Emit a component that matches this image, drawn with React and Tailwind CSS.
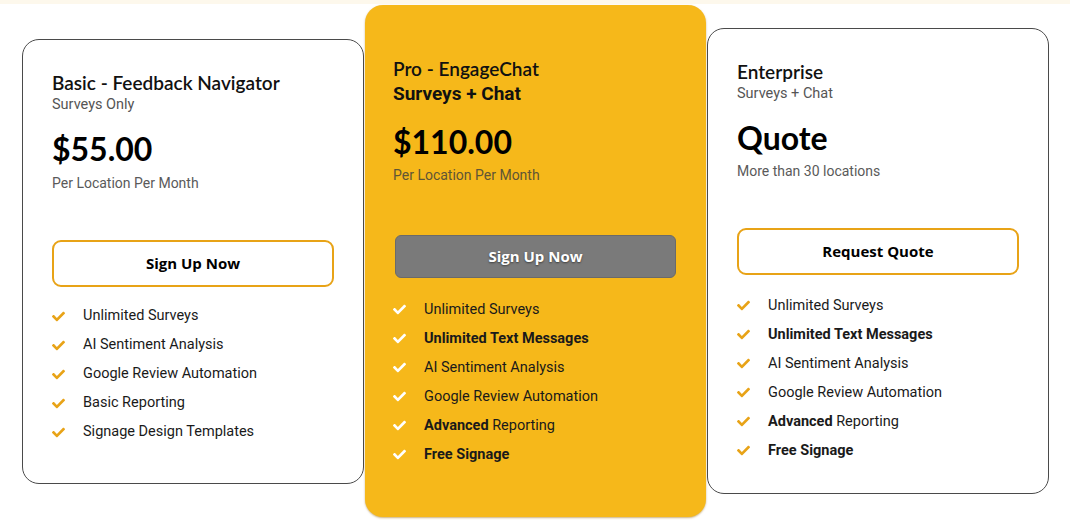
import React from 'react';
import { FaCheck } from 'react-icons/fa';

const lato = { fontFamily: 'Lato, "Open Sans", sans-serif' };
const roboto = { fontFamily: 'Roboto, "Liberation Sans", sans-serif' };
const openSans = { fontFamily: '"Open Sans", "Liberation Sans", sans-serif' };

const Feature = ({ children, light }) => (
    <li className="flex items-center h-[29px]">
        <FaCheck className={`w-[13px] h-[13px] shrink-0 ${light ? 'text-white' : 'text-[#e8a317]'}`} />
        <span className="ml-[18px] text-[14.5px] text-[#1a1a1a]" style={roboto}>{children}</span>
    </li>
);

const App = () => {
    return (
        <div className="w-[1070px] h-[528px] bg-white overflow-hidden">
            <div className="h-[4px] bg-[#fdf8ec]"></div>
            <div className="flex items-center gap-[1px] px-[22px] h-[514px]">
                {/* Basic */}
                <div className="w-[342px] h-[445px] border border-[#4a4a4a] rounded-[17px] bg-white pl-[29px] pr-[29px] pt-[30px]">
                    <h2 className="text-[19px] font-semibold text-[#111] leading-[26px]" style={lato}>Basic - Feedback Navigator</h2>
                    <p className="text-[14.5px] text-[#555] leading-[18px]" style={roboto}>Surveys Only</p>
                    <p className="mt-[15px] text-[32px] font-bold text-black leading-[40px]" style={lato}>$55.00</p>
                    <p className="mt-[5px] text-[14px] text-[#5a5a5a] leading-[18px]" style={roboto}>Per Location Per Month</p>
                    <button className="mt-[48px] w-[282px] h-[47px] border-2 border-[#e8a317] rounded-[9px] bg-white text-[15px] font-bold text-black" style={openSans}>
                        Sign Up Now
                    </button>
                    <ul className="mt-[15px]">
                        <Feature>Unlimited Surveys</Feature>
                        <Feature>AI Sentiment Analysis</Feature>
                        <Feature>Google Review Automation</Feature>
                        <Feature>Basic Reporting</Feature>
                        <Feature>Signage Design Templates</Feature>
                    </ul>
                </div>

                {/* Pro */}
                <div className="w-[341px] h-[512px] rounded-[18px] bg-[#f6b81a] shadow-[0_1px_2px_rgba(150,100,0,0.5)] pl-[28px] pr-[30px] pt-[51px]">
                    <h2 className="text-[19px] font-semibold text-[#111] leading-[26px]" style={lato}>Pro - EngageChat</h2>
                    <p className="text-[19px] font-bold text-[#111] leading-[24px]" style={roboto}>Surveys + Chat</p>
                    <p className="mt-[16px] text-[32px] font-bold text-black leading-[40px]" style={lato}>$110.00</p>
                    <p className="mt-[4px] text-[14px] text-[#5f5535] leading-[18px]" style={roboto}>Per Location Per Month</p>
                    <button
                        className="mt-[51px] ml-[2px] w-[281px] h-[43px] border border-[#6a6a6a] rounded-[6px] bg-[#7a7a7a] text-[15px] font-bold text-white [text-shadow:0_1px_2px_rgba(0,0,0,0.5)]"
                        style={openSans}
                    >
                        Sign Up Now
                    </button>
                    <ul className="mt-[17px]">
                        <Feature light>Unlimited Surveys</Feature>
                        <Feature light><b className="font-bold">Unlimited Text Messages</b></Feature>
                        <Feature light>AI Sentiment Analysis</Feature>
                        <Feature light>Google Review Automation</Feature>
                        <Feature light><b className="font-bold">Advanced</b> Reporting</Feature>
                        <Feature light><b className="font-bold">Free Signage</b></Feature>
                    </ul>
                </div>

                {/* Enterprise */}
                <div className="w-[342px] h-[466px] border border-[#4a4a4a] rounded-[17px] bg-white pl-[29px] pr-[29px] pt-[30px]">
                    <h2 className="text-[19px] font-semibold text-[#111] leading-[26px]" style={lato}>Enterprise</h2>
                    <p className="text-[14.5px] text-[#555] leading-[18px]" style={roboto}>Surveys + Chat</p>
                    <p className="mt-[15px] text-[32px] font-bold text-black leading-[40px]" style={lato}>Quote</p>
                    <p className="mt-[4px] text-[14px] text-[#5a5a5a] leading-[18px]" style={roboto}>More than 30 locations</p>
                    <button className="mt-[48px] w-[282px] h-[47px] border-2 border-[#e8a317] rounded-[9px] bg-white text-[15px] font-bold text-black" style={openSans}>
                        Request Quote
                    </button>
                    <ul className="mt-[16px]">
                        <Feature>Unlimited Surveys</Feature>
                        <Feature><b className="font-bold">Unlimited Text Messages</b></Feature>
                        <Feature>AI Sentiment Analysis</Feature>
                        <Feature>Google Review Automation</Feature>
                        <Feature><b className="font-bold">Advanced</b> Reporting</Feature>
                        <Feature><b className="font-bold">Free Signage</b></Feature>
                    </ul>
                </div>
            </div>
        </div>
    );
};

export default App;
